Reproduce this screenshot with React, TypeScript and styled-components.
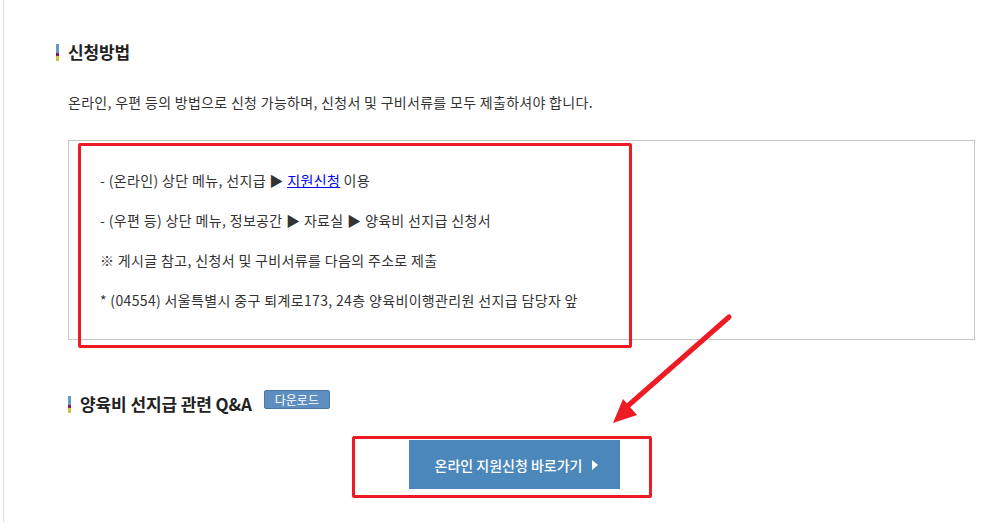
import React from 'react';
import styled, { createGlobalStyle } from 'styled-components';

const GlobalStyle = createGlobalStyle`
  html, body {
    margin: 0;
    padding: 0;
    background: #ffffff;
  }
  body {
    font-family: "Noto Sans CJK KR", "Noto Sans", sans-serif;
    color: #333333;
  }
`;

const red = '#ed1c24';
const blue = '#4b87bb';

const Page = styled.div`
  position: relative;
  height: 522px;
  overflow: hidden;
  margin-left: 3px;
  border-left: 1px solid #dedede;
  padding: 42px 22px 0 64px;
  box-sizing: border-box;
`;

const Heading = styled.h3<{ $indent?: number }>`
  display: flex;
  align-items: center;
  gap: 9px;
  margin: 0 0 0 ${p => p.$indent || 0}px;
  font-size: 17px;
  line-height: 20px;
  font-weight: 700;
  color: #222222;
  letter-spacing: -0.1px;
`;

const Bar = styled.span`
  display: block;
  width: 3px;
  height: 17px;
  background: linear-gradient(
    to bottom,
    #6d97c4 0,
    #6d97c4 53%,
    #8a1860 53%,
    #8a1860 71%,
    #c9c441 71%,
    #c9c441 100%
  );
`;

const Lead = styled.p`
  margin: 30px 0 0;
  font-size: 14px;
  line-height: 20px;
  letter-spacing: 0.3px;
`;

const InfoBox = styled.div`
  position: relative;
  margin-top: 28px;
  border: 1px solid #c6c6c6;
  padding: 19px 31px;
`;

const Line = styled.div`
  font-size: 14px;
  line-height: 40px;
  height: 40px;
  letter-spacing: 0.35px;
  white-space: nowrap;
`;

const Link = styled.a`
  color: #0000ee;
  text-decoration: underline;
`;

const Mark = styled.div<{ $w: number; $h: number; $l: number; $t: number }>`
  position: absolute;
  left: ${p => p.$l}px;
  top: ${p => p.$t}px;
  width: ${p => p.$w}px;
  height: ${p => p.$h}px;
  border: 3px solid ${red};
  border-radius: 2px;
  box-sizing: border-box;
  pointer-events: none;
`;

const QaRow = styled.div`
  display: flex;
  align-items: flex-start;
  gap: 12px;
  margin-top: 50px;
`;

const QaHeading = styled(Heading)`
  margin-top: 4px;
`;

const SmallButton = styled.button`
  height: 19px;
  width: 66px;
  padding: 0;
  border: 1px solid #4a79a6;
  border-radius: 2px;
  background: #5d8ebf;
  color: #ffffff;
  font-family: inherit;
  font-size: 12px;
  line-height: 16px;
`;

const ButtonRow = styled.div`
  display: flex;
  margin-top: 26px;
  padding-left: 341px;
`;

const ButtonWrap = styled.div`
  position: relative;
`;

const BigButton = styled.button`
  display: flex;
  align-items: center;
  justify-content: center;
  gap: 10px;
  width: 211px;
  height: 49px;
  border: none;
  background: ${blue};
  color: #ffffff;
  font-family: inherit;
  font-size: 14px;
  font-weight: 500;
  padding: 0 0 0 4px;
`;

const Caret = styled.span`
  width: 0;
  height: 0;
  border-top: 5px solid transparent;
  border-bottom: 5px solid transparent;
  border-left: 6px solid #ffffff;
`;

const Arrow = styled.svg`
  position: absolute;
  left: -4px;
  top: 0;
  pointer-events: none;
`;

export default function App() {
  return (
    <>
      <GlobalStyle />
      <Page>
        <Heading $indent={-12}>
          <Bar />
          신청방법
        </Heading>
        <Lead>온라인, 우편 등의 방법으로 신청 가능하며, 신청서 및 구비서류를 모두 제출하셔야 합니다.</Lead>

        <InfoBox>
          <Line>
            - (온라인) 상단 메뉴, 선지급 ▶ <Link href="#">지원신청</Link> 이용
          </Line>
          <Line>- (우편 등) 상단 메뉴, 정보공간 ▶ 자료실 ▶ 양육비 선지급 신청서</Line>
          <Line>※ 게시글 참고, 신청서 및 구비서류를 다음의 주소로 제출</Line>
          <Line>* (04554) 서울특별시 중구 퇴계로173, 24층 양육비이행관리원 선지급 담당자 앞</Line>
          <Mark $l={9} $t={2} $w={554} $h={205} />
        </InfoBox>

        <QaRow>
          <QaHeading>
            <Bar />
            양육비 선지급 관련 Q&amp;A
          </QaHeading>
          <SmallButton>다운로드</SmallButton>
        </QaRow>

        <ButtonRow>
          <ButtonWrap>
            <BigButton>
              온라인 지원신청 바로가기
              <Caret />
            </BigButton>
            <Mark $l={-57} $t={-4} $w={300} $h={62} />
          </ButtonWrap>
        </ButtonRow>

        <Arrow width="997" height="522" viewBox="0 0 997 522">
          <line x1="729" y1="317" x2="622" y2="411" stroke={red} strokeWidth="5" strokeLinecap="round" />
          <polygon points="613,423 623,399 637,415" fill={red} />
        </Arrow>
      </Page>
    </>
  );
}
